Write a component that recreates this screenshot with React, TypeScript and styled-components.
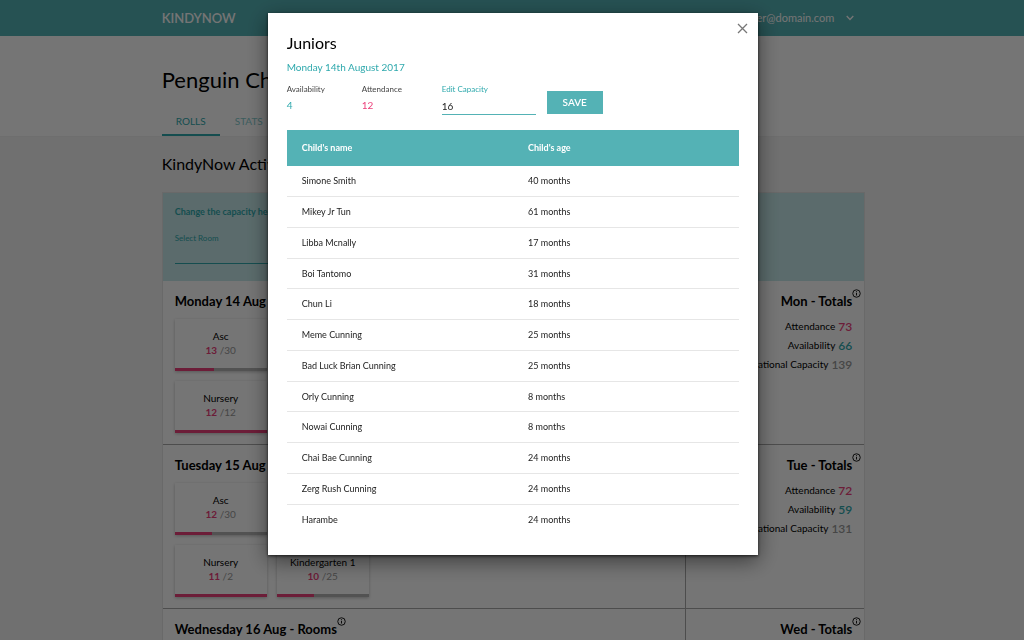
import React from "react";
import styled, { createGlobalStyle } from "styled-components";

const teal = "#54b2b5";
const tealText = "#2fa9ad";
const pink = "#ec407a";
const rule = "#a8a8a8";

const Global = createGlobalStyle`
  *, *::before, *::after { box-sizing: border-box; }
  body { margin: 0; font-family: Lato, "Open Sans", sans-serif; color: #000; background: #f4f4f4; }
  h1, h2, h3, p { margin: 0; }
  button, input, select { font: inherit; }
`;

/* The page behind the dialog does not scroll while the dialog is open. */
const Page = styled.main`
  height: 100vh;
  overflow: hidden;
`;
const Header = styled.header`
  height: 36px;
  background: ${teal};
  color: #fff;
`;
const Wrap = styled.div`
  width: 69%;
  max-width: 1100px;
  margin: 0 auto;
  padding-left: 3px;
`;
const HeaderInner = styled(Wrap)`
  height: 100%;
  display: flex;
  align-items: center;
  justify-content: space-between;
  padding-right: 11px;
`;
const Brand = styled.a`
  color: inherit;
  text-decoration: none;
  font-size: 13px;
  line-height: 20px;
  font-weight: 600;
`;
const Account = styled.button`
  display: flex;
  align-items: center;
  gap: 12px;
  padding: 0;
  border: 0;
  background: none;
  color: #fff;
  font-size: 11px;
  line-height: 16px;
`;
const Hero = styled.div`
  background: #fff;
  border-bottom: 1px solid #f0f0f0;
`;
const PageTitle = styled.h1`
  padding-top: 30px;
  font-size: 22px;
  line-height: 28px;
  font-weight: 400;
  white-space: nowrap;
`;
const Tabs = styled.nav`
  display: flex;
  margin-top: 12px;
`;
const Tab = styled.a<{ $active?: boolean }>`
  height: 30px;
  width: 58px;
  text-align: center;
  font-size: 10px;
  line-height: 30px;
  color: ${tealText};
  text-decoration: none;
  opacity: ${(p) => (p.$active ? 1 : 0.6)};
  border-bottom: 2px solid ${(p) => (p.$active ? tealText : "transparent")};
`;
const SectionTitle = styled.h2`
  padding: 17px 0 18px;
  font-size: 16px;
  line-height: 20px;
  font-weight: 400;
`;
const Board = styled.section`
  background: #fff;
  border: 1px solid #e4e4e4;
`;
const CapacityPanel = styled.form`
  height: 88px;
  padding: 12px;
  background: #c6eaeb;
  color: ${tealText};
`;
const PanelTitle = styled.h3`
  font-size: 9px;
  line-height: 14px;
`;
const RoomLabel = styled.label`
  display: block;
  margin-top: 12px;
  font-size: 8px;
  line-height: 14px;
`;
const RoomSelect = styled.select`
  display: block;
  width: 160px;
  height: 19px;
  appearance: none;
  border: 0;
  border-bottom: 1px solid ${tealText};
  border-radius: 0;
  background: transparent;
`;
const Day = styled.section`
  display: grid;
  grid-template-columns: 1fr 178px;
  border-bottom: 1px solid ${rule};
`;
const Rooms = styled.div`
  padding: 9px 12px 10px;
  min-height: 163px;
  border-right: 1px solid ${rule};
`;
const Totals = styled.div`
  padding: 9px 12px;
  text-align: right;
`;
const DayTitle = styled.h3`
  display: inline-block;
  position: relative;
  font-size: 13px;
  line-height: 20px;
  font-weight: 700;
`;
const InfoIcon = styled.svg`
  position: absolute;
  left: 100%;
  top: -2px;
  width: 9px;
  height: 9px;
`;
const RoomGrid = styled.div`
  display: grid;
  grid-template-columns: repeat(2, 92px);
  gap: 10px;
  margin-top: 8px;
`;
const RoomCard = styled.article`
  height: 52px;
  display: flex;
  flex-direction: column;
  text-align: center;
  font-size: 10px;
  line-height: 14px;
  padding-top: 10px;
  box-shadow: 0 1px 3px rgba(0, 0, 0, 0.25);
`;
const Count = styled.p`
  color: #999;
  b { color: ${pink}; }
`;
const Bar = styled.div`
  margin-top: auto;
  height: 3px;
  background: #b4b4b4;
`;
const BarFill = styled.div`
  height: 100%;
  background: ${pink};
`;
const TotalList = styled.div`
  margin-top: 6px;
`;
const TotalLine = styled.p<{ $color: string }>`
  display: flex;
  justify-content: flex-end;
  gap: 3px;
  font-size: 10px;
  line-height: 19px;
  white-space: nowrap;
  b { color: ${(p) => p.$color}; font-size: 12px; font-weight: 600; }
`;

const Overlay = styled.div`
  position: fixed;
  inset: 0;
  display: flex;
  justify-content: center;
  align-items: flex-start;
  padding: 13px 0 0 2px;
  background: rgba(0, 0, 0, 0.54);
`;
const Dialog = styled.div`
  position: relative;
  width: 48%;
  min-width: 480px;
  padding: 19px 19px 20px;
  background: #fff;
  box-shadow: 0 6px 20px rgba(0, 0, 0, 0.5), 0 1px 3px rgba(0, 0, 0, 0.7);
`;
const Close = styled.button`
  position: absolute;
  top: 10px;
  right: 10px;
  display: flex;
  padding: 0;
  border: 0;
  background: none;
  color: #777;
`;
const DialogTitle = styled.h2`
  font-size: 16px;
  line-height: 22px;
  font-weight: 400;
`;
const DateLine = styled.p`
  margin-top: 5px;
  font-size: 10px;
  line-height: 16px;
  color: ${tealText};
`;
const Stats = styled.form`
  display: flex;
  align-items: flex-start;
  margin-top: 6px;
`;
const Stat = styled.div<{ $width: number; $color: string }>`
  width: ${(p) => p.$width}px;
  font-size: 8px;
  line-height: 16px;
  color: #444;
  p { font-size: 10px; color: ${(p) => p.$color}; }
`;
const Field = styled.label`
  width: 94px;
  font-size: 8px;
  line-height: 16px;
  color: ${tealText};
`;
const Input = styled.input`
  display: block;
  width: 100%;
  height: 18px;
  padding: 0;
  border: 0;
  border-bottom: 1px solid ${teal};
  border-radius: 0;
  outline: 0;
  font-size: 10px;
  color: #222;
`;
const Save = styled.button`
  width: 56px;
  height: 23px;
  margin: 10px 0 0 11px;
  padding: 0 0 2px;
  border: 0;
  background: ${teal};
  color: #fff;
  font-size: 10px;
  line-height: 20px;
  font-weight: 600;
`;
const Table = styled.table`
  width: 100%;
  margin-top: 15px;
  border-collapse: separate;
  border-spacing: 0;
  table-layout: fixed;
  text-align: left;
  font-size: 9px;
  line-height: 14px;
  th, td { padding: 0 15px; }
  th { height: 36px; background: ${teal}; color: #fff; }
  td { height: 31px; color: #222; border-bottom: 1px solid #e6e6e6; }
  tr:nth-child(4n) td { height: 30px; }
  tr:last-child td { border-bottom: 0; }
`;

const Info = () => (
  <InfoIcon viewBox="0 0 18 18" fill="none" stroke="currentColor" strokeWidth="1.8">
    <circle cx="9" cy="9" r="7.5" />
    <path d="M9 8v5M9 4.5v2" />
  </InfoIcon>
);

type Room = { name: string; used: number; total: number; fill: number };
type DayInfo = { title: string; short: string; rooms: Room[]; totals?: [number, number, number] };

const days: DayInfo[] = [
  {
    title: "Monday 14 Aug - Rooms", short: "Mon", totals: [73, 66, 139],
    rooms: [
      { name: "Asc", used: 13, total: 30, fill: 43 },
      { name: "Juniors", used: 12, total: 16, fill: 75 },
      { name: "Nursery", used: 12, total: 12, fill: 100 },
    ],
  },
  {
    title: "Tuesday 15 Aug - Rooms", short: "Tue", totals: [72, 59, 131],
    rooms: [
      { name: "Asc", used: 12, total: 30, fill: 40 },
      { name: "Juniors", used: 12, total: 16, fill: 75 },
      { name: "Nursery", used: 11, total: 2, fill: 100 },
      { name: "Kindergarten 1", used: 10, total: 25, fill: 40 },
    ],
  },
  { title: "Wednesday 16 Aug - Rooms", short: "Wed", rooms: [] },
];

const children: [string, string][] = [
  ["Simone Smith", "40 months"],
  ["Mikey Jr Tun", "61 months"],
  ["Libba Mcnally", "17 months"],
  ["Boi Tantomo", "31 months"],
  ["Chun Li", "18 months"],
  ["Meme Cunning", "25 months"],
  ["Bad Luck Brian Cunning", "25 months"],
  ["Orly Cunning", "8 months"],
  ["Nowai Cunning", "8 months"],
  ["Chai Bae Cunning", "24 months"],
  ["Zerg Rush Cunning", "24 months"],
  ["Harambe", "24 months"],
];

export default function App() {
  return (
    <>
      <Global />
      <Page>
        <Header>
          <HeaderInner>
            <Brand href="#">KINDYNOW</Brand>
            <Account type="button">
              user@domain.com
              <svg width="8" height="6" viewBox="0 0 8 6" fill="none" stroke="currentColor" strokeWidth="1.3"><path d="M.7 1L4 4.5 7.3 1" /></svg>
            </Account>
          </HeaderInner>
        </Header>
        <Hero>
          <Wrap>
            <PageTitle>Penguin Childcare</PageTitle>
            <Tabs>
              <Tab href="#rolls" $active>ROLLS</Tab>
              <Tab href="#stats">STATS</Tab>
            </Tabs>
          </Wrap>
        </Hero>
        <Wrap>
          <SectionTitle>KindyNow Activity</SectionTitle>
          <Board>
            <CapacityPanel>
              <PanelTitle>Change the capacity here</PanelTitle>
              <RoomLabel htmlFor="room">Select Room</RoomLabel>
              <RoomSelect id="room" />
            </CapacityPanel>
            {days.map((d) => (
              <Day key={d.short}>
                <Rooms>
                  <DayTitle>{d.title}<Info /></DayTitle>
                  <RoomGrid>
                    {d.rooms.map((r) => (
                      <RoomCard key={r.name}>
                        <p>{r.name}</p>
                        <Count><b>{r.used}</b> /{r.total}</Count>
                        <Bar><BarFill style={{ width: `${r.fill}%` }} /></Bar>
                      </RoomCard>
                    ))}
                  </RoomGrid>
                </Rooms>
                <Totals>
                  <DayTitle>{d.short} - Totals<Info /></DayTitle>
                  {d.totals && (
                    <TotalList>
                      <TotalLine $color={pink}>Attendance <b>{d.totals[0]}</b></TotalLine>
                      <TotalLine $color={tealText}>Availability <b>{d.totals[1]}</b></TotalLine>
                      <TotalLine $color="#999">Operational Capacity <b>{d.totals[2]}</b></TotalLine>
                    </TotalList>
                  )}
                </Totals>
              </Day>
            ))}
          </Board>
        </Wrap>
      </Page>
      <Overlay>
        <Dialog role="dialog" aria-modal="true" aria-labelledby="dialog-title">
          <Close type="button" aria-label="Close">
            <svg width="11" height="11" viewBox="0 0 11 11" fill="none" stroke="currentColor" strokeWidth="1.3"><path d="M1 1l9 9M10 1l-9 9" /></svg>
          </Close>
          <DialogTitle id="dialog-title">Juniors</DialogTitle>
          <DateLine>Monday 14th August 2017</DateLine>
          <Stats>
            <Stat $width={75} $color={tealText}>Availability<p>4</p></Stat>
            <Stat $width={80} $color={pink}>Attendance<p>12</p></Stat>
            <Field>Edit Capacity<Input defaultValue="16" /></Field>
            <Save type="button">SAVE</Save>
          </Stats>
          <Table>
            <thead>
              <tr><th>Child's name</th><th>Child's age</th></tr>
            </thead>
            <tbody>
              {children.map(([name, age]) => (
                <tr key={name}><td>{name}</td><td>{age}</td></tr>
              ))}
            </tbody>
          </Table>
        </Dialog>
      </Overlay>
    </>
  );
}
